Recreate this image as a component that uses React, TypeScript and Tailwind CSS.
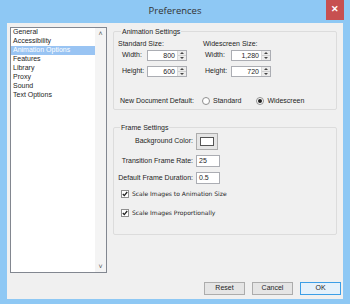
import { ReactNode } from 'react';

const font = { fontFamily: '"Liberation Sans", Arial, sans-serif' };

const pages = ['General', 'Accessibility', 'Animation Options', 'Features', 'Library', 'Proxy', 'Sound', 'Text Options'];

const Spin = ({ value }: { value: string }) => (
  <div className="flex h-[11px] w-[40px] border border-[#abadb3] bg-white">
    <div className="flex flex-1 items-center justify-end pr-[2px] text-[7px] leading-none">{value}</div>
    <div className="flex w-[9px] flex-col border-l border-[#d9d9d9] bg-[#ececec]">
      <div className="flex flex-1 items-center justify-center">
        <div className="h-0 w-0 border-x-[2px] border-b-[2px] border-x-transparent border-b-[#444]" />
      </div>
      <div className="h-px bg-[#d0d0d0]" />
      <div className="flex flex-1 items-center justify-center">
        <div className="h-0 w-0 border-x-[2px] border-t-[2px] border-x-transparent border-t-[#444]" />
      </div>
    </div>
  </div>
);

const Group = ({ title, className, children }: { title: string; className?: string; children: ReactNode }) => (
  <fieldset className={`rounded-[2px] border border-[#dcdcdc] ${className ?? ''}`}>
    <legend className="ml-[3px] px-[1px] text-[7px] leading-[9px] text-[#1e1e1e]">{title}</legend>
    {children}
  </fieldset>
);

const Check = ({ label }: { label: string }) => (
  <div className="flex items-center gap-[3px]">
    <div className="flex h-[8px] w-[8px] items-center justify-center border border-[#8f8f8f] bg-white">
      <svg width="6" height="6" viewBox="0 0 6 6">
        <path d="M0.8 3 L2.3 4.6 L5.2 1" fill="none" stroke="#222" strokeWidth="1.3" />
      </svg>
    </div>
    <span className="leading-none" style={{ fontFamily: '"DejaVu Sans", sans-serif', fontSize: '6px' }}>
      {label}
    </span>
  </div>
);

const Radio = ({ label, on }: { label: string; on?: boolean }) => (
  <div className="flex items-center gap-[3px]">
    <div className="flex h-[8px] w-[8px] items-center justify-center rounded-full border border-[#8f8f8f] bg-white">
      {on && <div className="h-[4px] w-[4px] rounded-full bg-[#222]" />}
    </div>
    <span>{label}</span>
  </div>
);

export default function App() {
  return (
    <div className="flex h-[304px] w-[350px] flex-col bg-[#8ec8f4] text-[#1e1e1e]" style={font}>
      {/* title bar */}
      <div className="relative flex h-[23px] items-center justify-center">
        <span className="text-[9.5px] text-[#333]" style={{ fontFamily: '"Open Sans", sans-serif' }}>Preferences</span>
        <div className="absolute right-[6px] top-0 flex h-[20px] w-[18px] items-center justify-center bg-[#c75050] text-[9px] font-bold text-white">
          ✕
        </div>
      </div>

      {/* client */}
      <div className="mx-[7px] mb-[5px] flex flex-1 flex-col bg-[#f0f0f0] pl-[3px] pr-[2px] pt-[4px] text-[7px]">
        <div className="flex h-[246px]">
          {/* list */}
          <div className="flex w-[97px] border border-[#828790] bg-white">
            <div className="flex-1">
              {pages.map((p) => (
                <div
                  key={p}
                  className={`h-[9px] pl-[2px] leading-[8px] ${p === 'Animation Options' ? 'bg-[#99c4f3] text-white' : ''}`}
                >
                  {p}
                </div>
              ))}
            </div>
            <div className="flex w-[11px] flex-col justify-between bg-[#f4f4f4] py-[2px] text-center text-[7px] leading-none text-[#555]">
              <span>˄</span>
              <span>˅</span>
            </div>
          </div>

          {/* settings */}
          <div className="ml-[6px] flex w-[224px] flex-col">
            <Group title="Animation Settings" className="h-[83px] pl-[4px]">
              <div className="flex">
                <div className="w-[85px]">
                  <div className="mt-[3px] leading-[9px]">Standard Size:</div>
                  <div className="mt-[2px] flex items-center pl-[4px]">
                    <span className="w-[25px]">Width:</span>
                    <Spin value="800" />
                  </div>
                  <div className="mt-[5px] flex items-center pl-[4px]">
                    <span className="w-[25px]">Height:</span>
                    <Spin value="600" />
                  </div>
                </div>
                <div>
                  <div className="mt-[3px] leading-[9px]">Widescreen Size:</div>
                  <div className="mt-[2px] flex items-center pl-[2px]">
                    <span className="w-[26px]">Width:</span>
                    <Spin value="1,280" />
                  </div>
                  <div className="mt-[5px] flex items-center pl-[2px]">
                    <span className="w-[26px]">Height:</span>
                    <Spin value="720" />
                  </div>
                </div>
              </div>
              <div className="mt-[19px] flex items-center pl-[2px]">
                <span className="w-[82px]">New Document Default:</span>
                <Radio label="Standard" />
                <div className="ml-[15px]">
                  <Radio label="Widescreen" on />
                </div>
              </div>
            </Group>

            <Group title="Frame Settings" className="mt-[13px] h-[112px] pl-[3px]">
              <div className="mt-[1px] grid grid-cols-[76px_auto] items-center gap-x-[3px] gap-y-[5px]">
                <span className="whitespace-nowrap text-right">Background Color:</span>
                <div className="flex h-[17px] w-[22px] items-center justify-center border border-[#acacac] bg-[#e5e5e5]">
                  <div className="h-[9px] w-[14px] border border-[#555] bg-white" />
                </div>
                <span className="whitespace-nowrap text-right">Transition Frame Rate:</span>
                <div className="flex h-[12px] w-[24px] items-center border border-[#abadb3] bg-white pl-[2px]">25</div>
                <span className="whitespace-nowrap text-right">Default Frame Duration:</span>
                <div className="flex h-[12px] w-[24px] items-center border border-[#abadb3] bg-white pl-[2px]">0.5</div>
              </div>
              <div className="mt-[6px] flex flex-col gap-[11px] pl-[4px]">
                <Check label="Scale Images to Animation Size" />
                <Check label="Scale Images Proportionally" />
              </div>
            </Group>
          </div>
        </div>

        {/* buttons */}
        <div className="mt-[9px] flex justify-end gap-[7px]">
          <div className="flex h-[13px] w-[41px] items-center justify-center border border-[#acacac] bg-[#e5e5e5]">Reset</div>
          <div className="flex h-[13px] w-[41px] items-center justify-center border border-[#acacac] bg-[#e5e5e5]">Cancel</div>
          <div className="flex h-[13px] w-[41px] items-center justify-center border border-[#3c9ee6] bg-[#e5f1fb]">OK</div>
        </div>
      </div>
    </div>
  );
}
